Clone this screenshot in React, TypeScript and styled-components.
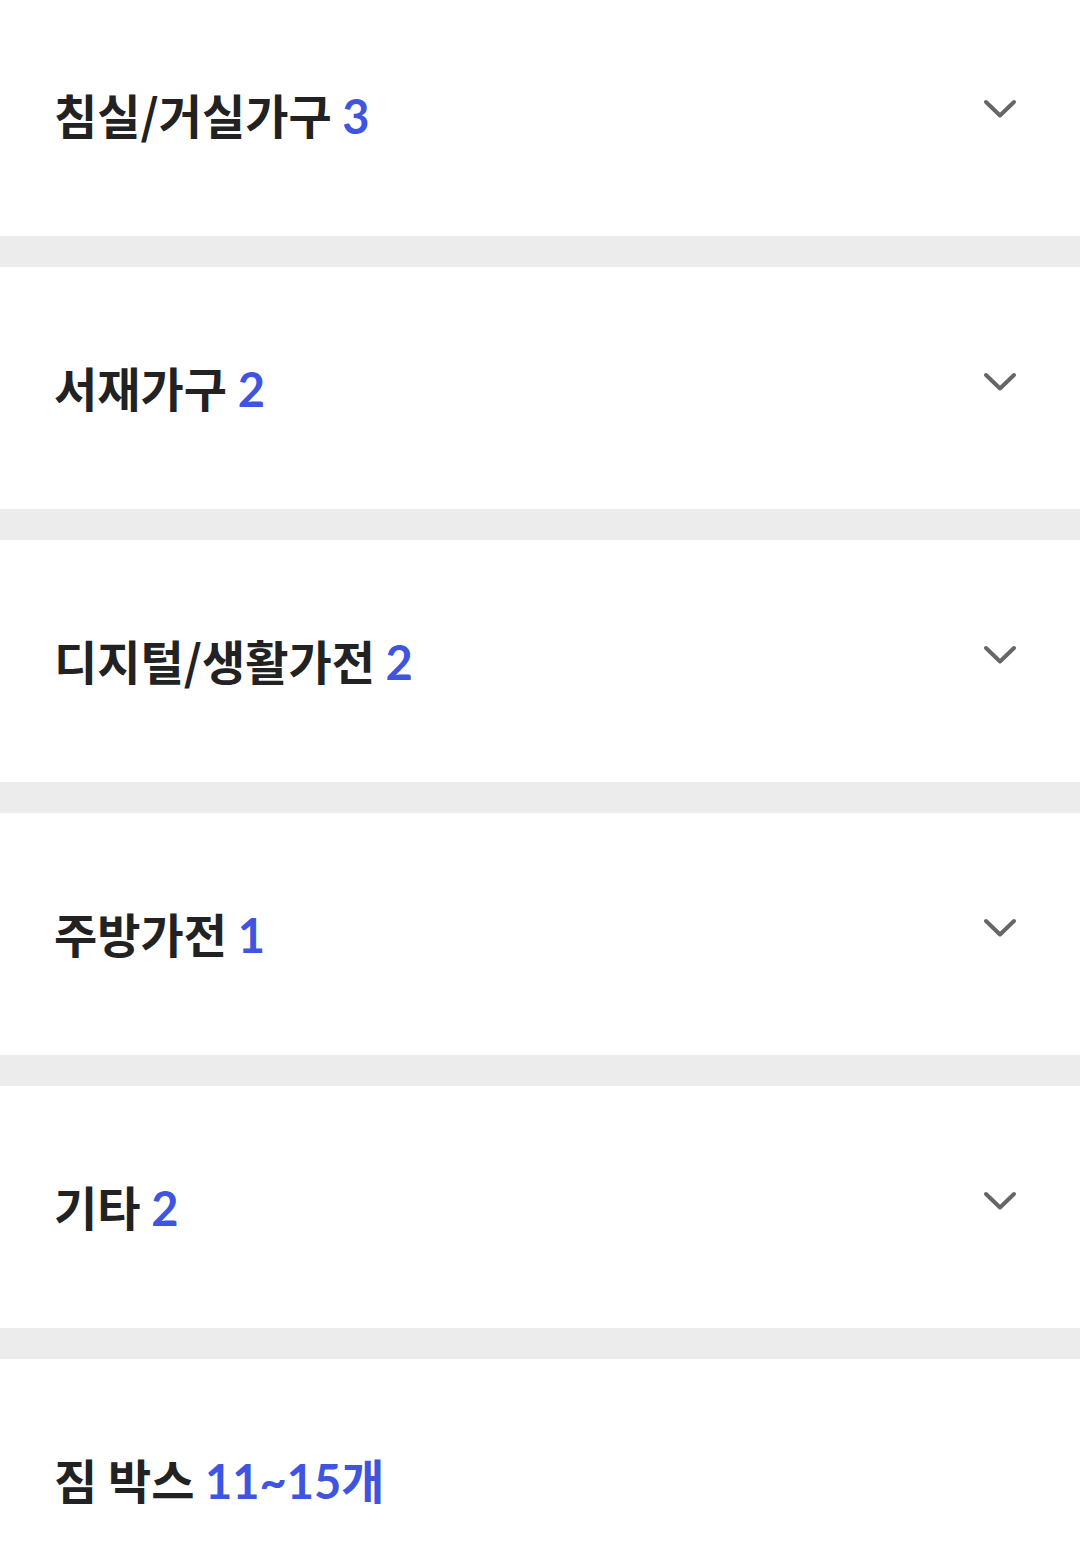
import React from "react";
import styled, { createGlobalStyle } from "styled-components";

const Global = createGlobalStyle`
  html, body { margin: 0; padding: 0; background: #fff; }
  body { font-family: "Noto Sans CJK KR", "Noto Sans", sans-serif; overflow: hidden; }
`;

const Page = styled.div`
  display: flex;
  flex-direction: column;
  margin-top: -6px;
  background: #ececec;
  gap: 31px;
`;

const Row = styled.div`
  height: 242px;
  background: #fff;
  display: flex;
  align-items: center;
  justify-content: space-between;
  padding: 0 60px 0 54px;
  box-sizing: border-box;
`;

const Title = styled.div`
  font-size: 47px;
  font-weight: 700;
  color: #222;
  line-height: 1;
`;

const Count = styled.span`
  color: #3f55e0;
  font-family: "Lato", "Noto Sans CJK KR", sans-serif;
  font-weight: 700;
`;

const Chevron = styled.svg`
  width: 40px;
  height: 40px;
  margin-bottom: 12px;
`;

const items: { name: string; count: string; chevron: boolean }[] = [
  { name: "침실/거실가구", count: "3", chevron: true },
  { name: "서재가구", count: "2", chevron: true },
  { name: "디지털/생활가전", count: "2", chevron: true },
  { name: "주방가전", count: "1", chevron: true },
  { name: "기타", count: "2", chevron: true },
  { name: "짐 박스", count: "11~15개", chevron: false },
];

export default function App() {
  return (
    <>
      <Global />
      <Page>
        {items.map((it) => (
          <Row key={it.name}>
            <Title>
              {it.name} <Count>{it.count}</Count>
            </Title>
            {it.chevron && (
              <Chevron viewBox="0 0 40 40" fill="none">
                <path
                  d="M6 13 L20 26.5 L34 13"
                  stroke="#666"
                  strokeWidth="4"
                  strokeLinecap="round"
                  strokeLinejoin="round"
                />
              </Chevron>
            )}
          </Row>
        ))}
      </Page>
    </>
  );
}
